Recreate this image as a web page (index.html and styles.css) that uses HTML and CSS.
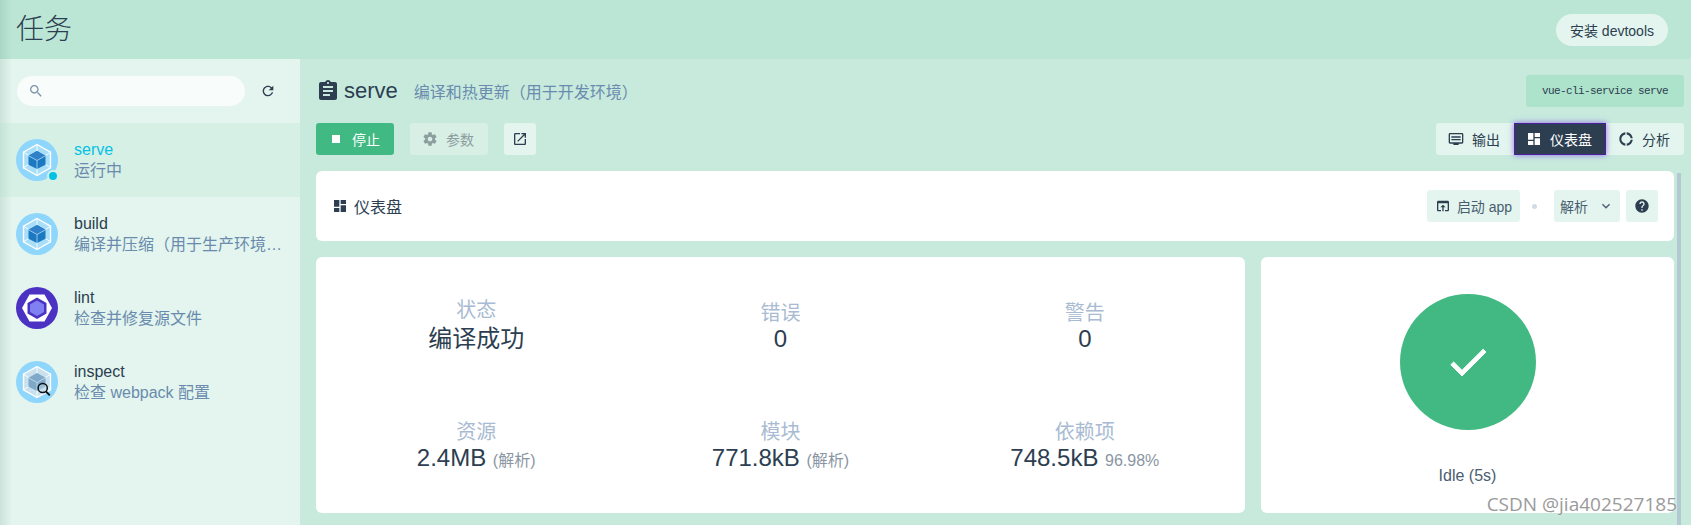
FILE: index.html
```html
<!DOCTYPE html>
<html>
<head>
  <meta charset="utf-8">
  <title>任务</title>
  <link rel="stylesheet" href="styles.css">
</head>
<body>
  <svg class="defs" width="0" height="0">
    <symbol id="webpack" viewBox="0 0 42 42">
      <circle cx="21" cy="21" r="21" fill="#8ed6fb"/>
      <polygon points="21,5.5 34.5,13.25 34.5,28.75 21,36.5 7.5,28.75 7.5,13.25" fill="#a9def9" stroke="#fff" stroke-width="1.4"/>
      <path d="M21 5.5v7M34.5 13.25l-5.5 3.5M34.5 28.75l-5.5-3.5M21 36.5v-7M7.5 28.75l5.5-3.5M7.5 13.25l5.5 3.5" stroke="#fff" stroke-width="0.9"/>
      <polygon points="21,12 29.5,16.75 29.5,25.75 21,30 12.5,25.75 12.5,16.75" fill="#1c78c0"/>
      <polygon points="21,12 29.5,16.75 21,21.5 12.5,16.75" fill="#2f80c8"/>
      <path d="M12.5 16.75l8.5 4.75 8.5-4.75M21 21.5V30" fill="none" stroke="#a9def9" stroke-width="0.8"/>
    </symbol>
    <symbol id="webpack-search" viewBox="0 0 42 42">
      <circle cx="21" cy="21" r="21" fill="#8ed6fb"/>
      <polygon points="21,5.5 34.5,13.25 34.5,28.75 21,36.5 7.5,28.75 7.5,13.25" fill="#c9e1ee" stroke="#fff" stroke-width="1.4"/>
      <path d="M21 5.5v7M34.5 13.25l-5.5 3.5M34.5 28.75l-5.5-3.5M21 36.5v-7M7.5 28.75l5.5-3.5M7.5 13.25l5.5 3.5" stroke="#fff" stroke-width="0.9"/>
      <polygon points="21,12 29.5,16.75 29.5,25.75 21,30 12.5,25.75 12.5,16.75" fill="#7fa8c9"/>
      <path d="M12.5 16.75l8.5 4.75 8.5-4.75M21 21.5V30" fill="none" stroke="#c9e1ee" stroke-width="0.8"/>
      <circle cx="26.7" cy="27" r="4.6" fill="#c9e1ee" fill-opacity="0.4" stroke="#0b0f14" stroke-width="1.5"/>
      <path d="M30 30.5l3.8 3.8" stroke="#0b0f14" stroke-width="1.8"/>
    </symbol>
    <symbol id="eslint" viewBox="0 0 42 42">
      <circle cx="21" cy="21" r="21" fill="#4b32c3"/>
      <polygon points="6,21 13.5,7.5 28.5,7.5 36,21 28.5,34.5 13.5,34.5" fill="#fff"/>
      <polygon points="21,10.5 30.5,16 30.5,26.5 21,32 11.5,26.5 11.5,16" fill="#4b32c3"/>
      <polygon points="21,13.5 28,17.5 28,25 21,29 14,25 14,17.5" fill="#8080f2"/>
    </symbol>
  </svg>

  <header class="top-bar">
    <h1 class="page-title">任务</h1>
    <button class="pill-button">安装 devtools</button>
  </header>

  <div class="layout">
    <aside class="sidebar">
      <div class="search-row">
        <div class="search-box">
          <svg class="search-icon" viewBox="0 0 24 24"><path d="M15.5 14h-.79l-.28-.27C15.41 12.59 16 11.11 16 9.5 16 5.91 13.09 3 9.5 3S3 5.91 3 9.5 5.91 16 9.5 16c1.61 0 3.09-.59 4.23-1.57l.27.28v.79l5 4.99L20.49 19l-4.99-5zm-6 0C7.01 14 5 11.99 5 9.5S7.01 5 9.5 5 14 7.01 14 9.5 11.99 14 9.5 14z"/></svg>
        </div>
        <svg class="refresh-icon" viewBox="0 0 24 24"><path d="M17.65 6.35C16.2 4.9 14.21 4 12 4c-4.42 0-7.99 3.58-7.99 8s3.57 8 7.99 8c3.73 0 6.84-2.55 7.73-6h-2.08c-.82 2.33-3.04 4-5.65 4-3.31 0-6-2.69-6-6s2.69-6 6-6c1.66 0 3.14.69 4.22 1.78L13 11h7V4l-2.35 2.35z"/></svg>
      </div>

      <div class="task selected">
        <div class="task-icon">
          <svg><use href="#webpack"/></svg>
          <span class="status-dot"></span>
        </div>
        <div class="task-text">
          <div class="task-name">serve</div>
          <div class="task-desc">运行中</div>
        </div>
      </div>
      <div class="task">
        <div class="task-icon"><svg><use href="#webpack"/></svg></div>
        <div class="task-text">
          <div class="task-name">build</div>
          <div class="task-desc">编译并压缩（用于生产环境…</div>
        </div>
      </div>
      <div class="task">
        <div class="task-icon"><svg><use href="#eslint"/></svg></div>
        <div class="task-text">
          <div class="task-name">lint</div>
          <div class="task-desc">检查并修复源文件</div>
        </div>
      </div>
      <div class="task">
        <div class="task-icon"><svg><use href="#webpack-search"/></svg></div>
        <div class="task-text">
          <div class="task-name">inspect</div>
          <div class="task-desc">检查 webpack 配置</div>
        </div>
      </div>
    </aside>

    <main class="content">
      <div class="title-row">
        <svg class="title-icon" viewBox="0 0 24 24"><path d="M19 3h-4.18C14.4 1.84 13.3 1 12 1c-1.3 0-2.4.84-2.82 2H5c-1.1 0-2 .9-2 2v14c0 1.1.9 2 2 2h14c1.1 0 2-.9 2-2V5c0-1.1-.9-2-2-2zm-7 0c.55 0 1 .45 1 1s-.45 1-1 1-1-.45-1-1 .45-1 1-1zm2 14H7v-2h7v2zm3-4H7v-2h10v2zm0-4H7V7h10v2z"/></svg>
        <span class="title-name">serve</span>
        <span class="title-desc">编译和热更新（用于开发环境）</span>
        <code class="command">vue-cli-service serve</code>
      </div>

      <div class="action-row">
        <button class="btn btn-green">
          <svg class="icon" viewBox="0 0 24 24"><path d="M6 6h12v12H6z"/></svg>停止
        </button>
        <button class="btn btn-disabled">
          <svg class="icon" viewBox="0 0 24 24"><path d="M19.43 12.98c.04-.32.07-.64.07-.98s-.03-.66-.07-.98l2.11-1.65c.19-.15.24-.42.12-.64l-2-3.46c-.12-.22-.39-.3-.61-.22l-2.49 1c-.52-.4-1.08-.73-1.69-.98l-.38-2.65C14.46 2.18 14.25 2 14 2h-4c-.25 0-.46.18-.49.42l-.38 2.65c-.61.25-1.17.59-1.69.98l-2.49-1c-.23-.09-.49 0-.61.22l-2 3.46c-.13.22-.07.49.12.64l2.11 1.65c-.04.32-.07.65-.07.98s.03.66.07.98l-2.11 1.65c-.19.15-.24.42-.12.64l2 3.46c.12.22.39.3.61.22l2.49-1c.52.4 1.08.73 1.69.98l.38 2.65c.03.24.24.42.49.42h4c.25 0 .46-.18.49-.42l.38-2.65c.61-.25 1.17-.59 1.69-.98l2.49 1c.23.09.49 0 .61-.22l2-3.46c.12-.22.07-.49-.12-.64l-2.11-1.65zM12 15.5c-1.93 0-3.5-1.57-3.5-3.5s1.57-3.5 3.5-3.5 3.5 1.57 3.5 3.5-1.57 3.5-3.5 3.5z"/></svg>参数
        </button>
        <button class="btn btn-light btn-square">
          <svg class="icon" viewBox="0 0 24 24"><path d="M19 19H5V5h7V3H5c-1.11 0-2 .9-2 2v14c0 1.1.89 2 2 2h14c1.1 0 2-.9 2-2v-7h-2v7zM14 3v2h3.59l-9.83 9.83 1.41 1.41L19 6.41V10h2V3h-7z"/></svg>
        </button>

        <div class="tabs">
          <button class="tab">
            <svg class="icon" viewBox="0 0 24 24"><path d="M21 3H3c-1.1 0-2 .9-2 2v12c0 1.1.9 2 2 2h5v2h8v-2h5c1.1 0 1.99-.9 1.99-2L23 5c0-1.1-.9-2-2-2zm0 14H3V5h18v12zm-2-9H5v2h14V8zm0 4H5v2h14v-2z"/></svg>输出
          </button>
          <button class="tab tab-active">
            <svg class="icon" viewBox="0 0 24 24"><path d="M3 13h8V3H3v10zm0 8h8v-6H3v6zm10 0h8V11h-8v10zm0-18v6h8V3h-8z"/></svg>仪表盘
          </button>
          <button class="tab">
            <svg class="icon" viewBox="0 0 24 24"><path d="M11 5.08V2c-5 .5-9 4.81-9 10s4 9.5 9 10v-3.08c-3-.48-6-3.19-6-6.92s3-6.44 6-6.92zM18.97 11H22c-.47-5-4-8.53-9-9v3.08C16 5.51 18.54 8 18.97 11zM13 18.92V22c5-.47 8.53-4 9-9h-3.03c-.43 3-2.97 5.49-5.97 5.92z"/></svg>分析
          </button>
        </div>
      </div>

      <div class="scroll-area">
        <div class="panels">
          <div class="card dash-bar">
            <svg class="dash-icon" viewBox="0 0 24 24"><path d="M3 13h8V3H3v10zm0 8h8v-6H3v6zm10 0h8V11h-8v10zm0-18v6h8V3h-8z"/></svg>
            <span class="dash-title">仪表盘</span>
            <button class="btn btn-light btn-app">
              <svg class="icon" viewBox="0 0 24 24"><path d="M19 4H5c-1.11 0-2 .9-2 2v12c0 1.1.89 2 2 2h4v-2H5V8h14v10h-4v2h4c1.1 0 2-.9 2-2V6c0-1.1-.89-2-2-2zm-7 6l-4 4h3v6h2v-6h3l-4-4z"/></svg>启动 app
            </button>
            <span class="dot"></span>
            <button class="btn btn-light btn-select">解析
              <svg class="icon-small" viewBox="0 0 24 24"><path d="M16.59 8.59L12 13.17 7.41 8.59 6 10l6 6 6-6z"/></svg>
            </button>
            <button class="btn btn-light btn-square">
              <svg class="icon-small" viewBox="0 0 24 24"><path d="M12 2C6.48 2 2 6.48 2 12s4.48 10 10 10 10-4.48 10-10S17.52 2 12 2zm1 17h-2v-2h2v2zm2.07-7.75l-.9.92C13.45 12.9 13 13.5 13 15h-2v-.5c0-1.1.45-2.1 1.17-2.83l1.24-1.26c.37-.36.59-.86.59-1.41 0-1.1-.9-2-2-2s-2 .9-2 2H8c0-2.21 1.79-4 4-4s4 1.79 4 4c0 .88-.36 1.68-.93 2.25z"/></svg>
            </button>
          </div>

          <div class="card-row">
            <div class="card stats">
              <div class="stat stat-text">
                <div class="stat-label">状态</div>
                <div class="stat-value">编译成功</div>
              </div>
              <div class="stat">
                <div class="stat-label">错误</div>
                <div class="stat-value">0</div>
              </div>
              <div class="stat">
                <div class="stat-label">警告</div>
                <div class="stat-value">0</div>
              </div>
              <div class="stat">
                <div class="stat-label">资源</div>
                <div class="stat-value">2.4MB <small>(解析)</small></div>
              </div>
              <div class="stat">
                <div class="stat-label">模块</div>
                <div class="stat-value">771.8kB <small>(解析)</small></div>
              </div>
              <div class="stat">
                <div class="stat-label">依赖项</div>
                <div class="stat-value">748.5kB <small>96.98%</small></div>
              </div>
            </div>

            <div class="card idle-card">
              <div class="idle-circle">
                <svg class="check-icon" viewBox="0 0 24 24"><path d="M9 16.17L4.83 12l-1.42 1.41L9 19 21 7l-1.41-1.41z"/></svg>
              </div>
              <div class="idle-text">Idle (5s)</div>
            </div>
          </div>
        </div>
        <div class="scrollbar"></div>
      </div>
    </main>
  </div>

  <div class="watermark">CSDN @jia402527185</div>
</body>
</html>
```

FILE: styles.css
```css
/* Task page */

* {
  box-sizing: border-box;
}

html,
body {
  height: 100%;
}

body {
  margin: 0;
  overflow: hidden;
  display: flex;
  flex-direction: column;
  font-family: "Liberation Sans", "Noto Sans CJK SC", sans-serif;
  font-size: 14px;
  color: #2c3e50;
  background: #c7eadd;
}

button {
  font: inherit;
  color: inherit;
  border: none;
  cursor: pointer;
}

svg {
  fill: currentColor;
  flex: none;
}

.defs {
  position: absolute;
}

/* top bar */

.top-bar {
  height: 59px;
  flex: none;
  display: flex;
  align-items: center;
  justify-content: space-between;
  padding: 0 23px 0 16px;
  background: linear-gradient(to right, #a9d6c5, #bbe6d6 12px);
}

.page-title {
  margin: 0;
  font-size: 28px;
  font-weight: 300;
  line-height: 54px;
}

.pill-button {
  height: 32px;
  width: 112px;
  border-radius: 16px;
  background: #e3f5ee;
  font-size: 14px;
}

.layout {
  flex: 1;
  display: flex;
  min-height: 0;
}

/* sidebar */

.sidebar {
  width: 300px;
  flex: none;
  background: linear-gradient(to right, #cbe3da, #e3f5ee 12px);
}

.search-row {
  height: 64px;
  display: flex;
  align-items: flex-start;
  padding: 17px 0 0 17px;
}

.search-box {
  width: 228px;
  height: 30px;
  display: flex;
  align-items: center;
  padding-left: 11px;
  border-radius: 15px;
  background: #f8fcfa;
}

.search-icon {
  width: 16px;
  height: 16px;
  color: #7e93ad;
}

.refresh-icon {
  width: 16px;
  height: 16px;
  margin: 7px 0 0 15px;
}

.task {
  height: 74px;
  display: flex;
  align-items: center;
  padding-left: 16px;
}

.task.selected {
  background: linear-gradient(to right, #c4e3d7, #d7f0e6 12px);
}

.task.selected .task-name {
  color: #03c2e6;
}

.task-icon {
  width: 42px;
  height: 42px;
  position: relative;
  flex: none;
}

.task-icon svg {
  width: 42px;
  height: 42px;
  display: block;
}

.status-dot {
  position: absolute;
  right: -1px;
  bottom: -1px;
  width: 12px;
  height: 12px;
  border-radius: 50%;
  background: #03c2e6;
  border: 2px solid #d7f0e6;
}

.task-text {
  margin-left: 16px;
  min-width: 0;
  font-size: 16px;
}

.task-name {
  line-height: 22px;
}

.task-desc {
  line-height: 20px;
  color: #6a8bad;
  white-space: nowrap;
}

/* main */

.content {
  flex: 1;
  min-width: 0;
  display: flex;
  flex-direction: column;
  padding: 16px 7px 0 16px;
}

.title-row {
  height: 32px;
  display: flex;
  align-items: center;
  flex: none;
}

.title-icon {
  width: 24px;
  height: 24px;
}

.title-name {
  margin-left: 4px;
  font-size: 22px;
  line-height: 32px;
}

.title-desc {
  margin-left: 16px;
  font-size: 16px;
  color: #6a8bad;
}

.command {
  margin-left: auto;
  width: 158px;
  height: 32px;
  line-height: 32px;
  text-align: center;
  border-radius: 3px;
  background: #ade2cb;
  font-family: "Liberation Mono", "Noto Sans CJK SC", monospace;
  font-size: 11px;
  letter-spacing: -0.6px;
}

.action-row {
  height: 32px;
  margin-top: 16px;
  flex: none;
  display: flex;
  align-items: center;
  gap: 16px;
}

.btn {
  height: 32px;
  display: flex;
  align-items: center;
  justify-content: center;
  border-radius: 3px;
  font-size: 14px;
  padding: 0;
}

.icon {
  width: 16px;
  height: 16px;
  margin-right: 8px;
}

.btn-green {
  width: 78px;
  padding-right: 2px;
  background: #40b983;
  color: #fff;
}

.btn-disabled {
  width: 78px;
  padding-right: 2px;
  background: #d8efe6;
  color: #8c9e9e;
}

.btn-light {
  background: #e3f5ee;
}

.btn-square {
  width: 32px;
}

.btn-square .icon {
  margin-right: 0;
}

.tabs {
  margin-left: auto;
  display: flex;
  height: 32px;
  border-radius: 3px;
  background: #e3f5ee;
}

.tab {
  width: 78px;
  height: 32px;
  padding: 0 2px 0 0;
  display: flex;
  align-items: center;
  justify-content: center;
  background: none;
  font-size: 14px;
}

.tab-active {
  width: 92px;
  background: #2c3e50;
  color: #fff;
  border: 1px solid #4d1f9c;
  box-shadow: 0 0 6px rgba(98, 0, 234, 0.55);
}

.scroll-area {
  flex: 1;
  min-height: 0;
  margin-top: 16px;
  display: flex;
  gap: 3px;
  padding-right: 3px;
}

.panels {
  flex: 1;
  min-width: 0;
}

.scrollbar {
  width: 4px;
  margin-top: 2px;
  background: #b3c8d0;
}

.card {
  background: #fff;
  border-radius: 6px;
}

.dash-bar {
  height: 70px;
  display: flex;
  align-items: center;
  padding: 0 16px;
}

.dash-icon {
  width: 16px;
  height: 16px;
}

.dash-title {
  margin-left: 6px;
  font-size: 16px;
  flex: 1;
}

.btn-app {
  width: 93px;
  color: #4a5d70;
}

.btn-app .icon {
  margin-right: 6px;
  color: #2c3e50;
}

.dot {
  width: 5px;
  height: 5px;
  margin: 0 17px 0 12px;
  border-radius: 50%;
  background: #d3dbe5;
}

.btn-select {
  width: 66px;
  margin-right: 6px;
  color: #4a5d70;
  gap: 10px;
}

.icon-small {
  width: 16px;
  height: 16px;
}

.card-row {
  display: flex;
  gap: 16px;
  margin-top: 16px;
}

.stats {
  width: 929px;
  height: 256px;
  padding: 8px;
  display: grid;
  grid-template-columns: repeat(3, 1fr);
  grid-template-rows: 120px 122px;
}

.stat {
  display: flex;
  flex-direction: column;
  align-items: center;
  justify-content: center;
  padding-top: 1px;
}

.stat-label {
  font-size: 20px;
  line-height: 26px;
  color: #a9bbd2;
}

.stat-value {
  font-size: 24px;
  line-height: 26px;
}

.stat-text .stat-value {
  line-height: 32px;
}

.stat-value small {
  font-size: 16px;
  color: #8a96a3;
}

.idle-card {
  flex: 1;
  height: 256px;
  display: flex;
  flex-direction: column;
  align-items: center;
  padding-top: 37px;
}

.idle-circle {
  width: 136px;
  height: 136px;
  display: flex;
  align-items: center;
  justify-content: center;
  border-radius: 50%;
  background: #42b983;
  color: #fff;
}

.check-icon {
  width: 48px;
  height: 48px;
  stroke: currentColor;
  stroke-width: 0.5;
}

.idle-text {
  margin-top: 36px;
  font-size: 16px;
  line-height: 20px;
  color: #4a5d70;
}

.watermark {
  position: absolute;
  right: 14px;
  bottom: 8px;
  font-family: "Open Sans", sans-serif;
  font-size: 19px;
  color: #9a9a9a;
  text-shadow: 0 0 2px #fff;
}
```
